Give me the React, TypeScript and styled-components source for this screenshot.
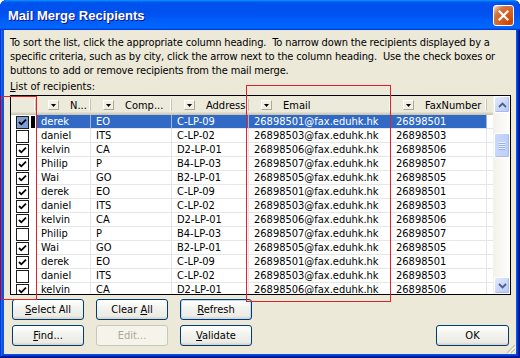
import styled, { createGlobalStyle } from "styled-components";

const GlobalStyle = createGlobalStyle`
  html, body { margin: 0; padding: 0; background: #fff; }
  body {
    font-family: "DejaVu Sans Condensed", "Liberation Sans", sans-serif;
    font-size: 11px;
    color: #000;
  }
`;

type Recipient = {
  checked: boolean;
  name: string;
  company: string;
  address: string;
  email: string;
  fax: string;
};

const people = [
  { name: "derek", company: "EO", address: "C-LP-09", fax: "26898501" },
  { name: "daniel", company: "ITS", address: "C-LP-02", fax: "26898503" },
  { name: "kelvin", company: "CA", address: "D2-LP-01", fax: "26898506" },
  { name: "Philip", company: "P", address: "B4-LP-03", fax: "26898507" },
  { name: "Wai", company: "GO", address: "B2-LP-01", fax: "26898505" },
];

const checks = [true, false, true, true, true, true, true, true, false, true, true, false, true];

const recipients: Recipient[] = checks.map((checked, i) => {
  const p = people[i % people.length];
  return { ...p, checked, email: `${p.fax}@fax.eduhk.hk` };
});

const COLS = "25px 55px 81px 77px 142px 96px 1fr";

export default function App() {
  return (
    <>
      <GlobalStyle />
      <Window>
        <TitleBar>
          <Title>Mail Merge Recipients</Title>
          <CloseButton>
            <svg width="11" height="11" viewBox="0 0 11 11">
              <path d="M1.5 1.5 L9.5 9.5 M9.5 1.5 L1.5 9.5" stroke="#fff" strokeWidth="2.2" strokeLinecap="square" />
            </svg>
          </CloseButton>
        </TitleBar>
        <Body>
          <Instructions>
            {"To sort the list, click the appropriate column heading.  To narrow down the recipients displayed by a\nspecific criteria, such as by city, click the arrow next to the column heading.  Use the check boxes or\nbuttons to add or remove recipients from the mail merge."}
          </Instructions>
          <Label>
            <u>L</u>ist of recipients:
          </Label>
          <ListView>
            <ListContent>
              <HeaderRow>
                <HeaderCell />
                {["N...", "Comp...", "Address", "Email", "FaxNumber"].map((h) => (
                  <HeaderCell key={h}>
                    <DropArrow>
                      <svg width="5" height="3" viewBox="0 0 5 3">
                        <path d="M0 0 H5 L2.5 3 Z" fill="#000" />
                      </svg>
                    </DropArrow>
                    <HeaderLabel>{h}</HeaderLabel>
                  </HeaderCell>
                ))}
                <HeaderFiller />
              </HeaderRow>
              {recipients.map((r, i) => (
                <Row key={i} $selected={i === 0}>
                  <CheckCell>
                    <CheckBox $selected={i === 0}>
                      {r.checked && (
                        <svg width="11" height="11" viewBox="0 0 11 11">
                          <path d="M2 5 L4.3 7.3 L9 2.6" stroke="#000" strokeWidth="1.8" fill="none" />
                        </svg>
                      )}
                    </CheckBox>
                    {i === 0 && <FocusMark />}
                  </CheckCell>
                  <Cell>{r.name}</Cell>
                  <Cell>{r.company}</Cell>
                  <Cell>{r.address}</Cell>
                  <Cell>{r.email}</Cell>
                  <Cell>{r.fax}</Cell>
                  <FillerCell />
                </Row>
              ))}
            </ListContent>
            <ScrollBar>
              <ScrollButton>
                <svg width="9" height="6" viewBox="0 0 9 6">
                  <path d="M1 5 L4.5 1.5 L8 5" stroke="#4d6185" strokeWidth="1.8" fill="none" />
                </svg>
              </ScrollButton>
              <ScrollTrack>
                <Thumb>
                  <Grip />
                  <Grip />
                  <Grip />
                  <Grip />
                </Thumb>
              </ScrollTrack>
              <ScrollButton>
                <svg width="9" height="6" viewBox="0 0 9 6">
                  <path d="M1 1 L4.5 4.5 L8 1" stroke="#4d6185" strokeWidth="1.8" fill="none" />
                </svg>
              </ScrollButton>
            </ScrollBar>
          </ListView>
          <ButtonArea>
            <Button>
              <u>S</u>elect All
            </Button>
            <Button>
              Clear <u>A</u>ll
            </Button>
            <Button $default>
              <u>R</u>efresh
            </Button>
            <span />
            <Button>
              <u>F</u>ind...
            </Button>
            <Button disabled>Edit...</Button>
            <Button>
              <u>V</u>alidate
            </Button>
            <Button>OK</Button>
          </ButtonArea>
        </Body>
        <SizeGrip>
          <svg width="11" height="11" viewBox="0 0 11 11">
            <path d="M10 2 L2 10 M10 6 L6 10 M10 9.5 L9.5 10" stroke="#c5c2b2" strokeWidth="1.2" />
            <path d="M11 3 L3 11 M11 7 L7 11" stroke="#fff" strokeWidth="1" />
          </svg>
        </SizeGrip>
        <Annotation style={{ left: 1, top: 96, width: 36, height: 204 }} />
        <Annotation style={{ left: 246, top: 85, width: 145, height: 217 }} />
      </Window>
    </>
  );
}

const Window = styled.div`
  position: relative;
  width: 520px;
  height: 358px;
  display: flex;
  flex-direction: column;
  background: #0855dd;
  box-shadow: inset -1px -1px #00138c, inset 1px 0 #0831d9, inset -2px -2px #001ea0,
    inset 2px 0 #166aee, inset -3px -3px #003bda, inset 3px 0 #0855dd;
  border-radius: 7px 7px 0 0;
  overflow: hidden;
`;

const TitleBar = styled.div`
  height: 30px;
  flex: none;
  display: flex;
  align-items: center;
  justify-content: space-between;
  padding: 0 6px 0 8px;
  background: linear-gradient(
    180deg,
    #0997ff,
    #0053ee 8%,
    #0050ee 40%,
    #0066ff 88%,
    #0066ff 93%,
    #005bff 95%,
    #003dd7 96%,
    #003dd7
  );
`;

const Title = styled.span`
  font-family: "Liberation Sans", sans-serif;
  font-weight: bold;
  font-size: 13px;
  color: #fff;
  text-shadow: 1px 1px #0f1089;
`;

const CloseButton = styled.div`
  width: 21px;
  height: 21px;
  box-sizing: border-box;
  border: 1px solid #fff;
  border-radius: 3px;
  display: flex;
  align-items: center;
  justify-content: center;
  background: radial-gradient(circle at 85% 85%, #cc4600 0%, #dc6527 55%, #cd7546 70%, #ffccb2 95%);
`;

const Body = styled.div`
  flex: 1;
  margin: 0 4px 4px;
  background: #ece9d8;
  padding: 6px 5px 0 6px;
  display: flex;
  flex-direction: column;
`;

const Instructions = styled.div`
  white-space: pre;
  line-height: 14px;
  letter-spacing: -0.14px;
`;

const Label = styled.div`
  margin-top: 2px;
  line-height: 14px;
`;

const ListView = styled.div`
  margin-top: 1px;
  height: 200px;
  box-sizing: border-box;
  border: 1px solid #000;
  background: #fff;
  display: flex;
`;

const ListContent = styled.div`
  width: 482px;
  overflow: hidden;
`;

const HeaderRow = styled.div`
  display: grid;
  grid-template-columns: ${COLS};
  height: 19px;
  background: #ebeadb;
  box-shadow: inset 0 -1px #cbc7b8, inset 0 -2px #d6d2c2, inset 0 -3px #e2decd;
`;

const HeaderCell = styled.div`
  position: relative;
  display: flex;
  align-items: center;
  padding-left: 12px;
  padding-bottom: 1px;
  overflow: hidden;
  &::after {
    content: "";
    position: absolute;
    right: 0;
    top: 3px;
    bottom: 4px;
    width: 1px;
    background: #c7c5b2;
    box-shadow: -1px 0 #fff;
  }
`;

const HeaderFiller = styled.div``;

const DropArrow = styled.div`
  width: 11px;
  height: 10px;
  flex: none;
  box-sizing: border-box;
  border: 1px solid #fff;
  border-right-color: #aca899;
  border-bottom-color: #aca899;
  background: #f1efe2;
  display: flex;
  align-items: center;
  justify-content: center;
`;

const HeaderLabel = styled.span`
  margin-left: 11px;
  white-space: nowrap;
`;

const Row = styled.div<{ $selected?: boolean }>`
  display: grid;
  grid-template-columns: ${COLS};
  height: 14px;
  color: ${(p) => (p.$selected ? "#fff" : "#000")};
  & > div:not(:first-child):not(:last-child) {
    background: ${(p) => (p.$selected ? "#316ac5" : "#fff")};
    border-right-color: ${(p) => (p.$selected ? "#9db5e0" : "#e6e6e6")};
  }
`;

const Cell = styled.div`
  box-sizing: border-box;
  border-right: 1px solid #e6e6e6;
  border-bottom: 1px solid #e6e6e6;
  padding-left: 5px;
  line-height: 13px;
  white-space: nowrap;
  overflow: hidden;
`;

const CheckCell = styled.div`
  position: relative;
  display: flex;
  align-items: center;
  padding-left: 5px;
`;

const CheckBox = styled.div<{ $selected?: boolean }>`
  width: 13px;
  height: 13px;
  box-sizing: border-box;
  border: 1px solid #1c1c1c;
  background: ${(p) => (p.$selected ? "#7d9fd8" : "#fff")};
  display: flex;
  align-items: center;
  justify-content: center;
`;

const FocusMark = styled.div`
  position: absolute;
  right: 1px;
  top: 1px;
  bottom: 1px;
  width: 4px;
  background: #000;
`;

const FillerCell = styled.div`
  border-bottom: 1px solid #e6e6e6;
  box-sizing: border-box;
`;

const ScrollBar = styled.div`
  width: 17px;
  display: flex;
  flex-direction: column;
  background: linear-gradient(90deg, #f3f1ec, #fefefb);
`;

const ScrollButton = styled.div`
  height: 17px;
  flex: none;
  box-sizing: border-box;
  margin: 0 0 0 1px;
  border: 1px solid #fff;
  border-radius: 2px;
  background: linear-gradient(135deg, #e1eafe 0%, #c6d5fb 60%, #b4c8f6 100%);
  box-shadow: inset -1px -1px #a8bcec;
  display: flex;
  align-items: center;
  justify-content: center;
`;

const ScrollTrack = styled.div`
  flex: 1;
  padding-top: 20px;
`;

const Thumb = styled.div`
  height: 25px;
  margin-left: 1px;
  box-sizing: border-box;
  border: 1px solid #fff;
  border-radius: 2px;
  background: linear-gradient(90deg, #c9d8fc, #bccdf8);
  box-shadow: inset -1px -1px #a8bcec;
  display: flex;
  flex-direction: column;
  align-items: center;
  justify-content: center;
  gap: 1px;
`;

const Grip = styled.div`
  width: 6px;
  height: 1px;
  background: #eef4fe;
  box-shadow: 0 1px #8cb0f8;
`;

const ButtonArea = styled.div`
  margin-top: 4px;
  display: grid;
  grid-template-columns: repeat(3, 72px) 1fr;
  grid-auto-rows: 21px;
  column-gap: 12px;
  row-gap: 5px;
  padding-left: 2px;
  padding-right: 2px;
  & > button:last-child {
    width: 73px;
    justify-self: end;
  }
`;

const Button = styled.button<{ $default?: boolean }>`
  font-family: inherit;
  font-size: 11px;
  color: #000;
  height: 21px;
  padding: 0;
  border: 1px solid #003c74;
  border-radius: 3px;
  background: linear-gradient(180deg, #fff 0%, #f3f3ef 40%, #ecebe6 85%, #d6d0c5 100%);
  box-shadow: ${(p) => (p.$default ? "inset 0 0 0 1px #c4d6f6, inset 0 -1px #9eb8ea" : "none")};
  &:disabled {
    color: #aca899;
    border-color: #c9c7ba;
    background: #f5f4ea;
  }
`;

const SizeGrip = styled.div`
  position: absolute;
  right: 4px;
  bottom: 4px;
  width: 11px;
  height: 11px;
`;

const Annotation = styled.div`
  position: absolute;
  box-sizing: border-box;
  border: 1px solid #e0202a;
  pointer-events: none;
`;
